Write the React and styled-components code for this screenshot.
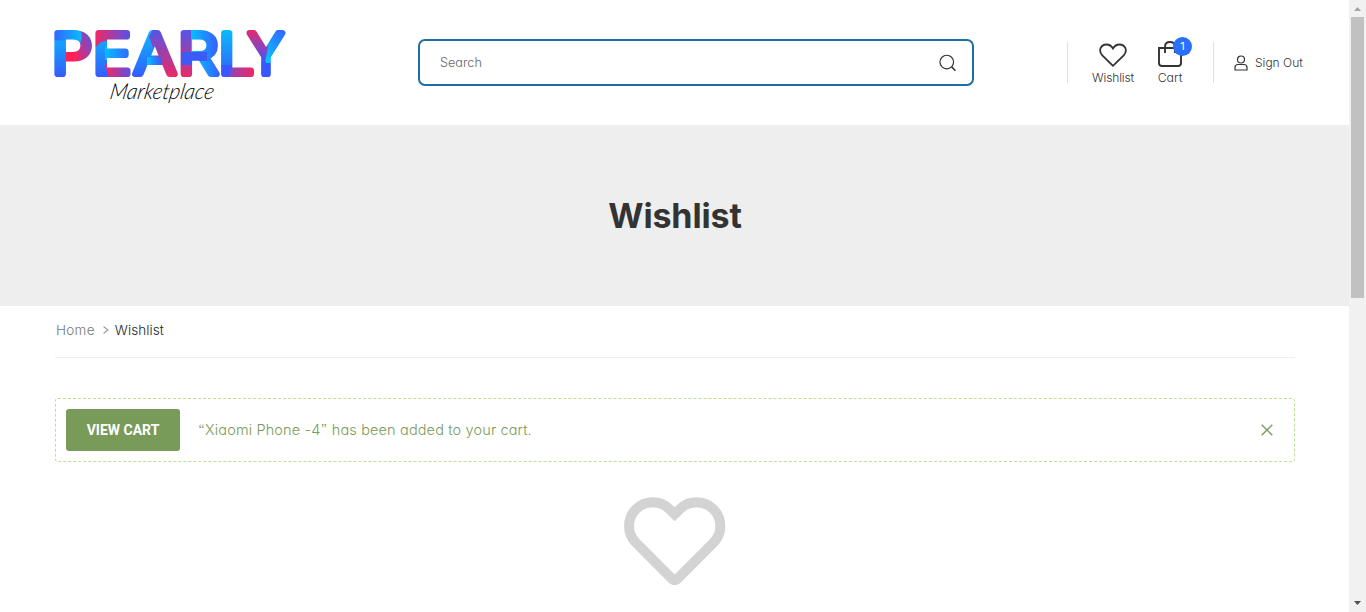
import React from "react";
import styled, { createGlobalStyle } from "styled-components";

const GlobalStyle = createGlobalStyle`
  * { box-sizing: border-box; }
  html, body { margin: 0; padding: 0; height: 100%; overflow: hidden; }
  body {
    background: #fff;
    color: #333;
    font-family: Inter, "Open Sans", sans-serif;
    font-feature-settings: "cv11" 1, "ss03" 1;
    font-weight: 400;
  }
`;

const Window = styled.div`
  display: flex;
  width: 1366px;
  height: 612px;
  overflow: hidden;
`;

const Page = styled.div`
  width: 1349px;
  height: 612px;
  overflow: hidden;
`;

const Header = styled.header`
  display: flex;
  align-items: center;
  height: 125px;
  padding: 0 0 0 50px;
`;

const Logo = styled.svg`
  display: block;
  width: 245px;
  height: 85px;
  margin-top: 10px;
  flex: none;
  overflow: visible;
`;

const SearchBox = styled.form`
  display: flex;
  align-items: center;
  justify-content: space-between;
  flex: none;
  width: 556px;
  height: 47px;
  margin-left: 123px;
  padding: 0 16px 0 20px;
  border: 2px solid #1c6ea4;
  border-radius: 7px;
`;

const Text = styled.span`
  display: block;
  white-space: nowrap;
  font-size: ${(p) => p.$size}px;
  line-height: ${(p) => p.$line || 18}px;
  font-weight: ${(p) => p.$weight || 350};
  letter-spacing: ${(p) => p.$track || 0}px;
  color: ${(p) => p.$color || "#333"};
`;

const Icon = styled.svg`
  display: block;
  flex: none;
`;

const Divider = styled.i`
  flex: none;
  width: 1px;
  height: 41px;
  margin-left: ${(p) => p.$gap || 0}px;
  background: #e1e1e1;
`;

const Actions = styled.nav`
  display: flex;
  align-items: center;
  margin-left: 93px;
`;

const Action = styled.a`
  position: relative;
  display: flex;
  flex-direction: column;
  align-items: center;
  justify-content: flex-end;
  gap: 1px;
  width: ${(p) => p.$width}px;
  height: 48px;
  margin-left: ${(p) => p.$gap}px;
`;

const Badge = styled.b`
  position: absolute;
  top: -2px;
  left: 16px;
  width: 19px;
  height: 19px;
  border-radius: 50%;
  background: #2970ff;
  color: #fff;
  font-size: 11px;
  font-weight: 400;
  line-height: 18px;
  text-align: center;
`;

const Account = styled.a`
  display: flex;
  align-items: center;
  gap: 7px;
  margin-left: 20px;
`;

const Banner = styled.section`
  display: flex;
  align-items: center;
  justify-content: center;
  height: 181px;
  padding-left: 1px;
  background: #eee;
`;

const Title = styled.h1`
  margin: 0;
  font-size: 34px;
  font-weight: 700;
  line-height: 40px;
  letter-spacing: -0.15px;
  color: #333;
`;

const Container = styled.main`
  width: 1240px;
  margin-left: 55px;
`;

const Breadcrumb = styled.div`
  display: flex;
  align-items: center;
  height: 52px;
  padding: 0 0 3px 1px;
  border-bottom: 1px solid #eee;
`;

const Chevron = styled(Icon)`
  margin: 0 6px 0 8px;
`;

const Notice = styled.div`
  display: flex;
  align-items: center;
  height: 64px;
  margin-top: 40px;
  padding: 0 21px 0 10px;
  border: 1px dashed #bfdf95;
  border-radius: 3px;
`;

const CartButton = styled.button`
  width: 114px;
  height: 42px;
  margin-right: 18px;
  padding: 0;
  border: 0;
  border-radius: 3px;
  background: #799b5a;
  color: #fff;
  font: 700 14px/40px Roboto, sans-serif;
`;

const CloseIcon = styled(Icon)`
  margin-left: auto;
`;

const Empty = styled.div`
  display: flex;
  justify-content: center;
  padding-top: 34px;
`;

const Scrollbar = styled.aside`
  display: flex;
  flex-direction: column;
  align-items: center;
  justify-content: space-between;
  width: 17px;
  height: 612px;
  background: #f1f1f1;
`;

const Thumb = styled.div`
  width: 13px;
  height: 281px;
  margin-bottom: auto;
  background: #c1c1c1;
`;

const letters = [
  { c: "P", x: 1.8, w: 40.5 },
  { c: "E", x: 42.8, w: 38.6 },
  { c: "A", x: 83.8, w: 42.4 },
  { c: "R", x: 128, w: 40.6 },
  { c: "L", x: 168.4, w: 35.4 },
  { c: "Y", x: 198, w: 36 },
];

const Wordmark = () =>
  letters.map((l) => (
    <text
      key={l.c}
      x={l.x}
      y="49"
      textLength={l.w}
      lengthAdjust="spacingAndGlyphs"
      fontFamily="Inter, sans-serif"
      fontSize="56.500"
      fontWeight="300"
      fill="url(#ribbons)"
      stroke="url(#ribbons)"
      strokeWidth="6.200"
      strokeLinejoin="round"
    >
      {l.c}
    </text>
  ));

const Gradient = ({ id, from, to, x2 = 0, y2 = 0 }) => (
  <linearGradient id={id} x1="0" y1="0" x2={x2} y2={y2}>
    <stop offset="0" stopColor={from} />
    <stop offset="1" stopColor={to} />
  </linearGradient>
);

function PearlyLogo() {
  return (
    <Logo viewBox="0 0 245 85">
      <defs>
        <Gradient id="blueDown" from="#05c1ff" to="#3758ff" y2={1} />
        <Gradient id="blueRight" from="#3659ff" to="#08c0ff" x2={1} />
        <Gradient id="pinkRight" from="#f82560" to="#4b55f2" x2={1} />
        <Gradient id="redRight" from="#6852dd" to="#ff2058" x2={1} />
        <Gradient id="redDown" from="#4b58ef" to="#f5265f" y2={1} />
        <linearGradient id="redUp" x1="1" y1="0" x2="0" y2="1">
          <stop offset="0" stopColor="#3f5cf8" />
          <stop offset="1" stopColor="#ff2058" />
        </linearGradient>
        <Gradient id="pinkDown" from="#f52660" to="#3d58ff" y2={1} />
        <Gradient id="cyanRight" from="#07bfff" to="#385aff" x2={1} />
        <linearGradient id="armY" x1="1" y1="0" x2="0" y2="1">
          <stop offset="0.1" stopColor="#345fff" />
          <stop offset="0.9" stopColor="#08c4ff" />
        </linearGradient>
        <pattern id="ribbons" patternUnits="userSpaceOnUse" x="0" y="0" width="245" height="60">
          <rect y="2" width="245" height="52" fill="url(#blueDown)" />
          <rect x="0" y="2" width="33" height="13.500" fill="url(#blueRight)" />
          <rect x="15.500" y="24" width="14" height="16" fill="#ff2058" />
          <path d="M29 3q4 6 2 13-1 6-5 10l3 13h16V3z" fill="url(#redUp)" />
          <path d="M44 2h38v14H56q-6 0-10 6h-2z" fill="url(#pinkRight)" />
          <rect x="55" y="21" width="28" height="14" fill="url(#cyanRight)" />
          <path d="M56 39h27v16H62q-6-5-6-16z" fill="url(#pinkRight)" />
          <path d="M99 12l5-10h9l18 52h-16z" fill="url(#redDown)" />
          <rect x="97" y="32" width="14" height="11" fill="url(#cyanRight)" />
          <path d="M130 2h11v54h-11z" fill="url(#redDown)" />
          <path d="M141 2h28v34h-28z" fill="url(#cyanRight)" />
          <path d="M131 27h26v13h-26z" fill="#3c5bf5" />
          <path d="M145 36h20l6 20h-16z" fill="url(#cyanRight)" />
          <path d="M171 41h35v14h-25l-10-8z" fill="url(#redRight)" />
          <path d="M171 40h11v2l-3 10h-8z" fill="#3758ff" />
          <path d="M208 31h17v24h-17z" fill="#3758ff" />
          <path d="M240 2h-14l-14 22 4 14 8 0z" fill="url(#armY)" />
          <path d="M192 2h16l10 20-3 16-8-2z" fill="url(#pinkDown)" />
        </pattern>
      </defs>
      <Wordmark />
      <text
        x="59"
        y="74"
        textLength="104"
        lengthAdjust="spacingAndGlyphs"
        transform="translate(13 0) skewX(-10)"
        fontFamily="Lato, sans-serif"
        fontStyle="italic"
        fontSize="22"
        fontWeight="300"
        fill="#000"
      >
        Marketplace
      </text>
    </Logo>
  );
}

export default function App() {
  return (
    <>
      <GlobalStyle />
      <Window>
        <Page>
          <Header>
            <PearlyLogo />
            <SearchBox>
              <Text $size={12.7} $color="#666">Search</Text>
              <Icon width="17" height="18" viewBox="0 0 17.500 18" fill="none" stroke="#333" strokeWidth="1.2">
                <circle cx="8" cy="8" r="7" />
                <path d="M13 13l4 4" strokeWidth="1.600" />
              </Icon>
            </SearchBox>
            <Actions>
              <Divider />
              <Action $width={42} $gap={24}>
                <Icon width="28" height="25" viewBox="0 0 28 25" fill="none" stroke="#333" strokeWidth="1.8">
                  <path d="M14 22.800L3.300 12.300C-1.300 7 2.300 1.500 7.500 1.500c3 0 5 1.500 6.500 4 1.500-2.500 3.500-4 6.500-4C25.700 1.500 29.300 7 24.700 12.300Z" />
                </Icon>
                <Text $size={12} $track={-0.15}>Wishlist</Text>
              </Action>
              <Action $width={26} $gap={23}>
                <Icon width="26" height="28" viewBox="0 0 26 28" fill="none" stroke="#333" strokeWidth="1.900">
                  <path d="M2 8h22v15q0 3-3 3H5q-3 0-3-3zM8 13V7q0-5 5-5t5 5v6" />
                </Icon>
                <Text $size={12.3}>Cart</Text>
                <Badge>1</Badge>
              </Action>
              <Divider $gap={30} />
              <Account>
                <Icon width="14" height="16" viewBox="0 0 14 16" fill="none" stroke="#333" strokeWidth="1.2">
                  <circle cx="7" cy="4.500" r="3.500" />
                  <path d="M1 15v-2.500Q1 9.500 4 9.500h6q3 0 3 3V15z" />
                </Icon>
                <Text $size={12}>Sign Out</Text>
              </Account>
            </Actions>
          </Header>
          <Banner>
            <Title>Wishlist</Title>
          </Banner>
          <Container>
            <Breadcrumb>
              <Text $size={13.5} $track={0.3} $color="#777">Home</Text>
              <Chevron width="6" height="8" viewBox="0 0 6 8" fill="none" stroke="#999" strokeWidth="1.1">
                <path d="M.5.5L5 4 .5 7.500" />
              </Chevron>
              <Text $size={13.5} $track={0.08} $color="#222">Wishlist</Text>
            </Breadcrumb>
            <Notice>
              <CartButton>VIEW CART</CartButton>
              <Text $size={14.5} $track={0.14} $line={22} $color="#799b5a">“Xiaomi Phone -4” has been added to your cart.</Text>
              <CloseIcon width="12" height="12" viewBox="0 0 12 12" fill="none" stroke="#799b5a" strokeWidth="1.4">
                <path d="M.7.7l10.600 10.600M11.300.7L.7 11.300" />
              </CloseIcon>
            </Notice>
            <Empty>
              <Icon width="102" height="92" viewBox="0 0 102 92" fill="none" stroke="#d3d3d3" strokeWidth="10">
                <path d="M12 46.800A23.700 23.700 0 0 1 45.600 13.200L50.700 18.300L55.800 13.200A23.700 23.700 0 0 1 89.400 46.800L53 83.200Q50.700 85 48.400 83.200Z" />
              </Icon>
            </Empty>
          </Container>
        </Page>
        <Scrollbar>
          <Icon width="17" height="17" viewBox="0 0 17 17" fill="#a3a3a3">
            <path d="M5 11h7L8.500 7z" />
          </Icon>
          <Thumb />
          <Icon width="17" height="17" viewBox="0 0 17 17" fill="#505050">
            <path d="M5 6h7l-3.500 4z" />
          </Icon>
        </Scrollbar>
      </Window>
    </>
  );
}
